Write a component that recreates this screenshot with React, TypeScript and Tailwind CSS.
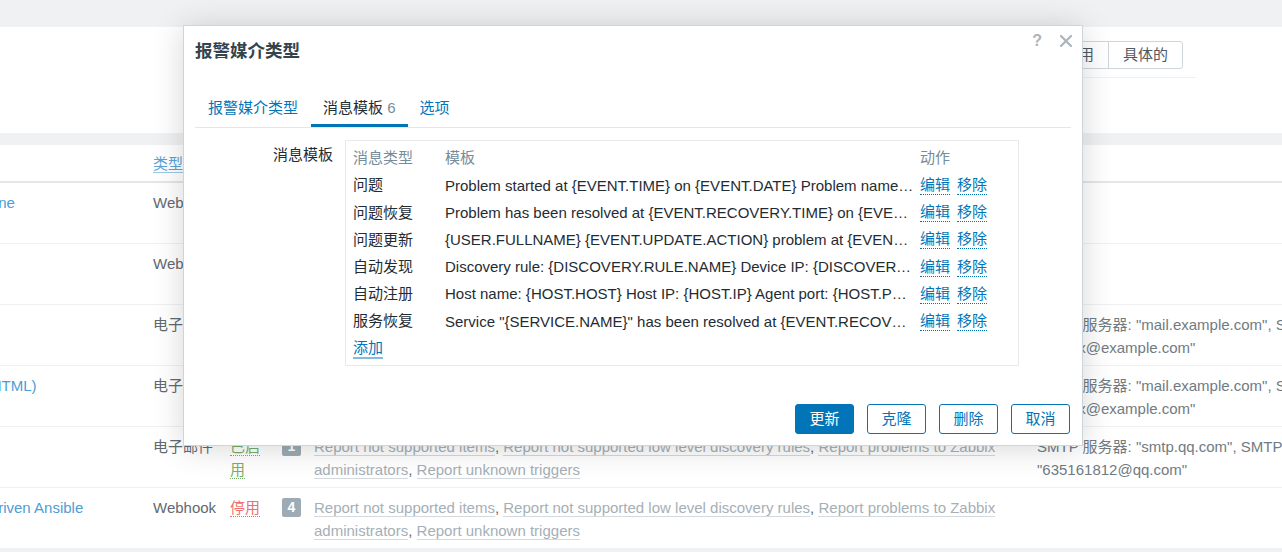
import React from "react";

const FONT = "font-['Liberation_Sans','Noto_Sans_CJK_SC',sans-serif]";

type Row = {
  name: string;
  type: string;
  status?: "on" | "off";
  count?: number;
  details?: [string, string];
};

const rows: Row[] = [
  { name: "Brevis.one", type: "Webhook" },
  { name: "Discord", type: "Webhook" },
  {
    name: "Email",
    type: "电子邮件",
    details: ['SMTP 服务器: "mail.example.com", SMTP 电子邮件:', '"zabbix@example.com"'],
  },
  {
    name: "Email (HTML)",
    type: "电子邮件",
    details: ['SMTP 服务器: "mail.example.com", SMTP 电子邮件:', '"zabbix@example.com"'],
  },
  {
    name: "QQ邮箱",
    type: "电子邮件",
    status: "on",
    count: 1,
    details: ['SMTP 服务器: "smtp.qq.com", SMTP 电子邮件:', '"635161812@qq.com"'],
  },
  { name: "Event-Driven Ansible", type: "Webhook", status: "off", count: 4 },
];

const templates: [string, string][] = [
  [
    "问题",
    "Problem started at {EVENT.TIME} on {EVENT.DATE} Problem name: {EVENT.NAME} Host: {HOST.NAME} Severity: {EVENT.SEVERITY}",
  ],
  [
    "问题恢复",
    "Problem has been resolved at {EVENT.RECOVERY.TIME} on {EVENT.RECOVERY.DATE} Problem name: {EVENT.NAME}",
  ],
  [
    "问题更新",
    "{USER.FULLNAME} {EVENT.UPDATE.ACTION} problem at {EVENT.UPDATE.DATE} {EVENT.UPDATE.TIME}.",
  ],
  [
    "自动发现",
    "Discovery rule: {DISCOVERY.RULE.NAME} Device IP: {DISCOVERY.DEVICE.IPADDRESS} Device DNS: {DISCOVERY.DEVICE.DNS}",
  ],
  ["自动注册", "Host name: {HOST.HOST} Host IP: {HOST.IP} Agent port: {HOST.PORT}"],
  [
    "服务恢复",
    'Service "{SERVICE.NAME}" has been resolved at {EVENT.RECOVERY.TIME} on {EVENT.RECOVERY.DATE}',
  ],
];

function ReportLinks() {
  const link = "text-[#a5afb6] border-b border-[#d3d9dd]";
  return (
    <div className="w-[700px] leading-[23px]">
      <span className={link}>Report not supported items</span>,{" "}
      <span className={link}>Report not supported low level discovery rules</span>,{" "}
      <span className={link}>Report problems to Zabbix administrators</span>,{" "}
      <span className={link}>Report unknown triggers</span>
    </div>
  );
}

function Background() {
  return (
    <div className="flex flex-col">
      <div className="h-[27px]" />
      <div className="h-[106px] bg-white flex flex-col items-end pr-[99px] pt-[14px]">
        <div className="flex h-[28px] border border-[#cfd6da] rounded-[3px] text-[#4f5b62] leading-[26px]">
          <div className="px-[14px] border-r border-[#cfd6da]">任何</div>
          <div className="px-[14px] border-r border-[#cfd6da]">已启用</div>
          <div className="px-[14px]">具体的</div>
        </div>
        <div className="mt-[8px] mr-[-13px] w-[560px] border-t border-[#eef0f2]" />
      </div>
      <div className="h-[12px]" />
      <div className="bg-white ml-[-56px] w-[1338px] text-[#5f6a71]">
        <div className="h-[38px] flex items-end pb-[7px] border-b-2 border-[#e3e7ea]">
          <div className="w-[209px] shrink-0" />
          <div className="w-[77px] shrink-0 text-[#5aa3d6] leading-[20px]">
            <span className="border-b border-[#9cc7e5]">类型</span>
          </div>
        </div>
        {rows.map((r, i) => (
          <div key={i} className="h-[61px] flex pt-[8px] border-b border-[#eef0f2] leading-[23px]">
            <div className="w-[209px] shrink-0 whitespace-nowrap text-[#4e9dd4]">{r.name}</div>
            <div className="w-[77px] shrink-0 whitespace-nowrap">{r.type}</div>
            <div className="w-[52px] shrink-0 pr-[14px]">
              {r.status === "on" && (
                <span className="text-[#76b06a] border-b border-dotted border-[#76b06a]">已启用</span>
              )}
              {r.status === "off" && (
                <span className="text-[#ec6f6f] border-b border-dotted border-[#ec6f6f]">停用</span>
              )}
            </div>
            <div className="w-[755px] shrink-0 flex">
              {r.count !== undefined && (
                <>
                  <div className="mt-[2px] w-[19px] h-[19px] shrink-0 rounded-[2px] bg-[#9dabb4] text-white text-[14px] font-bold leading-[19px] text-center">
                    {r.count}
                  </div>
                  <div className="ml-[13px]">
                    <ReportLinks />
                  </div>
                </>
              )}
            </div>
            <div className="shrink-0 whitespace-nowrap text-[#707b82]">
              {r.details && (
                <>
                  <div>{r.details[0]}</div>
                  <div>{r.details[1]}</div>
                </>
              )}
            </div>
          </div>
        ))}
      </div>
    </div>
  );
}

function Dialog() {
  const actLink = "text-[#0275b8] border-b border-dotted border-[#0275b8] leading-[18px]";
  return (
    <div className="absolute left-[183px] top-[25px] w-[900px] h-[421px] bg-white border border-[#ccd5da] shadow-[0_2px_30px_rgba(0,0,0,0.16)] flex flex-col px-[11px]">
      <div className="h-[59px] pt-[13px] text-[17.5px] font-bold text-[#36434b] leading-[24px]">报警媒介类型</div>
      <div className="absolute right-[40px] top-[6px] text-[16px] font-bold text-[#a9b5bb] leading-[18px]">?</div>
      <svg className="absolute right-[10px] top-[9px]" width="12" height="12" viewBox="0 0 12 12">
        <path d="M1 1L11 11M11 1L1 11" stroke="#a9b5bb" strokeWidth="2.2" strokeLinecap="round" />
      </svg>

      <div className="flex border-b border-[#e3e7ea] h-[43px] leading-[20px]">
        <div className="px-[13px] pt-[13px] text-[#0275b8]">报警媒介类型</div>
        <div className="px-[12px] pt-[13px] border-b-[3px] border-[#0275b8] text-[#1f2c33]">
          消息模板 <span className="text-[#768d99]">6</span>
        </div>
        <div className="px-[12px] pt-[13px] text-[#0275b8]">选项</div>
      </div>

      <div className="flex mt-[12px] flex-1">
        <div className="w-[138px] shrink-0 text-right pt-[5px] leading-[20px] text-[#1f2c33]">消息模板</div>
        <div className="ml-[12px] w-[674px] h-[226px] border border-[#e6eaed] px-[7px] pt-[4px]">
          <div className="flex h-[27px] items-center text-[#768d99]">
            <div className="w-[92px] shrink-0">消息类型</div>
            <div className="w-[475px] shrink-0">模板</div>
            <div>动作</div>
          </div>
          {templates.map(([t, body], i) => (
            <div key={i} className="flex h-[27.2px] items-center text-[#1f2c33]">
              <div className="w-[92px] shrink-0 whitespace-nowrap">{t}</div>
              <div className="w-[475px] shrink-0 pr-[6px]">
                <div className="truncate leading-[20px]">{body}</div>
              </div>
              <div className="flex gap-[7px]">
                <span className={actLink}>编辑</span>
                <span className={actLink}>移除</span>
              </div>
            </div>
          ))}
          <div className="flex h-[27.2px] items-center">
            <span className="text-[#0275b8] border-b-2 border-[#86b9dc] leading-[18px]">添加</span>
          </div>
        </div>
      </div>

      <div className="flex justify-end gap-[13px] pb-[11px] pr-[1px]">
        <div className="w-[59px] h-[30px] rounded-[3px] bg-[#0275b8] border border-[#0275b8] text-white flex items-center justify-center">更新</div>
        <div className="w-[59px] h-[30px] rounded-[3px] border border-[#0275b8] text-[#0275b8] flex items-center justify-center">克隆</div>
        <div className="w-[59px] h-[30px] rounded-[3px] border border-[#0275b8] text-[#0275b8] flex items-center justify-center">删除</div>
        <div className="w-[59px] h-[30px] rounded-[3px] border border-[#0275b8] text-[#0275b8] flex items-center justify-center">取消</div>
      </div>
    </div>
  );
}

export default function App() {
  return (
    <div className={`relative w-[1282px] h-[552px] overflow-hidden bg-[#eff1f3] text-[15px] ${FONT}`}>
      <Background />
      <Dialog />
    </div>
  );
}
